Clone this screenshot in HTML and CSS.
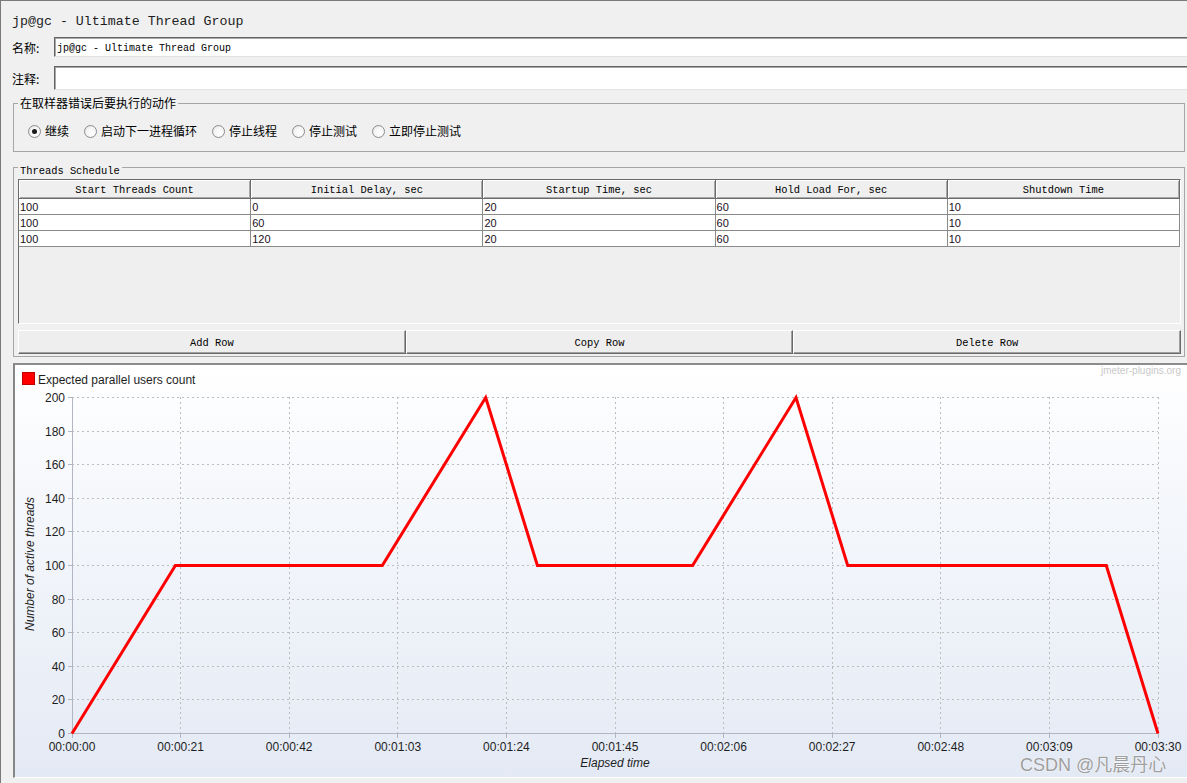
FILE: index.html
```html
<!DOCTYPE html>
<html lang="zh-CN">
<head>
<meta charset="utf-8">
<title>jp@gc - Ultimate Thread Group</title>
<link rel="stylesheet" href="styles.css">
</head>
<body>
<div class="frame">
  <div class="title">jp@gc - Ultimate Thread Group</div>

  <div class="field-row name-row">
    <label class="field-label">名称:</label>
    <div class="text-input">jp@gc - Ultimate Thread Group</div>
  </div>
  <div class="field-row comment-row">
    <label class="field-label">注释:</label>
    <div class="text-input"></div>
  </div>

  <fieldset class="group action-group">
    <legend class="legend-cjk">在取样器错误后要执行的动作</legend>
    <div class="radio-row">
      <span class="radio-item"><span class="radio checked"></span><span class="radio-label">继续</span></span>
      <span class="radio-item"><span class="radio"></span><span class="radio-label">启动下一进程循环</span></span>
      <span class="radio-item"><span class="radio"></span><span class="radio-label">停止线程</span></span>
      <span class="radio-item"><span class="radio"></span><span class="radio-label">停止测试</span></span>
      <span class="radio-item"><span class="radio"></span><span class="radio-label">立即停止测试</span></span>
    </div>
  </fieldset>

  <fieldset class="group schedule-group">
    <legend class="legend-mono">Threads Schedule</legend>
    <div class="table-pane">
      <table class="schedule">
        <thead>
          <tr>
            <th>Start Threads Count</th>
            <th>Initial Delay, sec</th>
            <th>Startup Time, sec</th>
            <th>Hold Load For, sec</th>
            <th>Shutdown Time</th>
          </tr>
        </thead>
        <tbody>
          <tr><td>100</td><td>0</td><td>20</td><td>60</td><td>10</td></tr>
          <tr><td>100</td><td>60</td><td>20</td><td>60</td><td>10</td></tr>
          <tr><td>100</td><td>120</td><td>20</td><td>60</td><td>10</td></tr>
        </tbody>
      </table>
    </div>
    <div class="button-row">
      <button class="btn">Add Row</button>
      <button class="btn">Copy Row</button>
      <button class="btn">Delete Row</button>
    </div>
  </fieldset>

  <div class="chart-panel">
    <svg class="chart" width="1172" height="412" viewBox="15 365 1172 412" xmlns="http://www.w3.org/2000/svg">
      <text class="brand" x="1181" y="374" text-anchor="end">jmeter-plugins.org</text>
      <rect class="legend-swatch" x="22.5" y="372.5" width="12" height="12"/>
      <text class="legend-text" x="38" y="383.5">Expected parallel users count</text>

      <g class="grid">
        <line x1="72" y1="397.5" x2="1158" y2="397.5"/>
        <line x1="72" y1="431.5" x2="1158" y2="431.5"/>
        <line x1="72" y1="464.5" x2="1158" y2="464.5"/>
        <line x1="72" y1="498.5" x2="1158" y2="498.5"/>
        <line x1="72" y1="531.5" x2="1158" y2="531.5"/>
        <line x1="72" y1="565.5" x2="1158" y2="565.5"/>
        <line x1="72" y1="599.5" x2="1158" y2="599.5"/>
        <line x1="72" y1="632.5" x2="1158" y2="632.5"/>
        <line x1="72" y1="666.5" x2="1158" y2="666.5"/>
        <line x1="72" y1="699.5" x2="1158" y2="699.5"/>
        <line x1="180.5" y1="397" x2="180.5" y2="733"/>
        <line x1="289.5" y1="397" x2="289.5" y2="733"/>
        <line x1="397.5" y1="397" x2="397.5" y2="733"/>
        <line x1="506.5" y1="397" x2="506.5" y2="733"/>
        <line x1="615.5" y1="397" x2="615.5" y2="733"/>
        <line x1="723.5" y1="397" x2="723.5" y2="733"/>
        <line x1="832.5" y1="397" x2="832.5" y2="733"/>
        <line x1="940.5" y1="397" x2="940.5" y2="733"/>
        <line x1="1049.5" y1="397" x2="1049.5" y2="733"/>
        <line x1="1158.5" y1="397" x2="1158.5" y2="733"/>
      </g>

      <g class="axis">
        <line x1="72.5" y1="397" x2="72.5" y2="734"/>
        <line x1="72" y1="733.5" x2="1159" y2="733.5"/>
        <line x1="68" y1="397.5" x2="72" y2="397.5"/>
        <line x1="68" y1="431.5" x2="72" y2="431.5"/>
        <line x1="68" y1="464.5" x2="72" y2="464.5"/>
        <line x1="68" y1="498.5" x2="72" y2="498.5"/>
        <line x1="68" y1="531.5" x2="72" y2="531.5"/>
        <line x1="68" y1="565.5" x2="72" y2="565.5"/>
        <line x1="68" y1="599.5" x2="72" y2="599.5"/>
        <line x1="68" y1="632.5" x2="72" y2="632.5"/>
        <line x1="68" y1="666.5" x2="72" y2="666.5"/>
        <line x1="68" y1="699.5" x2="72" y2="699.5"/>
        <line x1="68" y1="733.5" x2="72" y2="733.5"/>
        <line x1="72.5" y1="734" x2="72.5" y2="738"/>
        <line x1="180.5" y1="734" x2="180.5" y2="738"/>
        <line x1="289.5" y1="734" x2="289.5" y2="738"/>
        <line x1="397.5" y1="734" x2="397.5" y2="738"/>
        <line x1="506.5" y1="734" x2="506.5" y2="738"/>
        <line x1="615.5" y1="734" x2="615.5" y2="738"/>
        <line x1="723.5" y1="734" x2="723.5" y2="738"/>
        <line x1="832.5" y1="734" x2="832.5" y2="738"/>
        <line x1="940.5" y1="734" x2="940.5" y2="738"/>
        <line x1="1049.5" y1="734" x2="1049.5" y2="738"/>
        <line x1="1158.5" y1="734" x2="1158.5" y2="738"/>
      </g>

      <g class="tick-label" text-anchor="end">
        <text x="65" y="401.5">200</text>
        <text x="65" y="435.5">180</text>
        <text x="65" y="468.5">160</text>
        <text x="65" y="502.5">140</text>
        <text x="65" y="535.5">120</text>
        <text x="65" y="569.5">100</text>
        <text x="65" y="603.5">80</text>
        <text x="65" y="636.5">60</text>
        <text x="65" y="670.5">40</text>
        <text x="65" y="703.5">20</text>
        <text x="65" y="737.5">0</text>
      </g>
      <g class="tick-label" text-anchor="middle">
        <text x="72" y="751">00:00:00</text>
        <text x="180.6" y="751">00:00:21</text>
        <text x="289.2" y="751">00:00:42</text>
        <text x="397.8" y="751">00:01:03</text>
        <text x="506.4" y="751">00:01:24</text>
        <text x="615" y="751">00:01:45</text>
        <text x="723.6" y="751">00:02:06</text>
        <text x="832.2" y="751">00:02:27</text>
        <text x="940.8" y="751">00:02:48</text>
        <text x="1049.4" y="751">00:03:09</text>
        <text x="1158" y="751">00:03:30</text>
      </g>

      <text class="axis-title" x="615" y="766.5" text-anchor="middle">Elapsed time</text>
      <text class="axis-title" x="0" y="0" text-anchor="middle" transform="translate(33.5 564) rotate(-90)">Number of active threads</text>

      <polyline class="series" points="72,733.5 175.4,565.5 382.3,565.5 485.7,397.5 537.4,565.5 692.6,565.5 796,397.5 847.7,565.5 1106.3,565.5 1158,733.5"/>

      <text class="watermark" x="1020" y="771">CSDN @凡晨丹心</text>
    </svg>
  </div>
</div>
</body>
</html>
```

FILE: styles.css
```css
* {
  box-sizing: border-box;
}

html,
body {
  margin: 0;
  padding: 0;
}

body {
  width: 1187px;
  height: 783px;
  overflow: hidden;
  background: #f0f0f0;
  color: #000;
  font-family: "Noto Sans CJK SC", sans-serif;
}

.frame {
  height: 783px;
  display: flex;
  flex-direction: column;
  border-top: 1px solid #7a7a7a;
  border-left: 1px solid #7a7a7a;
}

.title {
  padding: 9px 0 3px 11px;
  font: 13.3px/24px "Liberation Mono", monospace;
  color: #1d1d1d;
  white-space: nowrap;
}

.field-row {
  display: flex;
  align-items: stretch;
}

.name-row {
  height: 20px;
}

.comment-row {
  height: 24px;
  margin-top: 9px;
}

.field-label {
  width: 53px;
  padding-left: 11px;
  padding-top: 1px;
  display: flex;
  align-items: center;
  font: 12px/14px "Noto Sans CJK SC", sans-serif;
  color: #000;
}

.text-input {
  flex: 1;
  background: #fff;
  border-top: 1px solid #646464;
  border-left: 1px solid #646464;
  border-bottom: 1px solid #e3e3e3;
  box-shadow: inset 1px 1px 0 #a8a8a8;
  padding: 3px 0 0 2px;
  font: 10px/15px "Liberation Mono", monospace;
  color: #000;
  white-space: nowrap;
}

.group {
  margin: 0 2px 0 12px;
  padding: 0;
  border: 1px solid #a6a6a6;
  min-width: 0;
}

.action-group {
  margin-top: 6px;
}

.legend-cjk {
  margin-left: 4px;
  padding: 0 2px;
  font: 12px/14px "Noto Sans CJK SC", sans-serif;
  color: #000;
}

.radio-row {
  display: flex;
  align-items: center;
  gap: 15px;
  height: 20px;
  margin: 11px 0 10px 14px;
}

.radio-item {
  display: flex;
  align-items: center;
  gap: 4px;
}

.radio {
  width: 13px;
  height: 13px;
  border-radius: 50%;
  border: 1px solid #8c8c8c;
  background: radial-gradient(circle at 65% 65%, #ffffff 0%, #f4f4f4 55%, #dcdcdc 100%);
  display: flex;
  align-items: center;
  justify-content: center;
}

.radio.checked::after {
  content: "";
  width: 5px;
  height: 5px;
  border-radius: 50%;
  background: #1b1b1b;
}

.radio-label {
  font: 12px/14px "Noto Sans CJK SC", sans-serif;
  color: #000;
  white-space: nowrap;
}

.schedule-group {
  margin-top: 5px;
  padding: 2px 3px 2px 4px;
}

.legend-mono {
  margin-left: 0;
  padding: 8px 2px 0;
  font: 10.4px/12px "Liberation Mono", monospace;
  color: #000;
}

.table-pane {
  height: 145px;
  background: #efefef;
  border-top: 1px solid #6a6a6a;
  border-left: 1px solid #6a6a6a;
  border-right: 1px solid #ffffff;
  border-bottom: 1px solid #ffffff;
  overflow: hidden;
}

.schedule {
  width: 100%;
  table-layout: fixed;
  border-collapse: separate;
  border-spacing: 0;
}

.schedule th {
  height: 19px;
  padding: 3px 0 0;
  background: #efefef;
  border-right: 1px solid #6b6b6b;
  border-bottom: 1px solid #6b6b6b;
  box-shadow: inset 1px 1px 0 #ffffff, inset -1px -1px 0 #a9a9a9;
  font: 10.4px/15px "Liberation Mono", monospace;
  font-weight: normal;
  color: #000;
  text-align: center;
  white-space: nowrap;
}

.schedule td {
  height: 16px;
  padding: 2px 1px 0;
  background: #ffffff;
  border-right: 1px solid #8a8a8a;
  border-bottom: 1px solid #8a8a8a;
  font: 11px/13px "Liberation Sans", Arial, sans-serif;
  color: #1a0f1a;
  white-space: nowrap;
}

.button-row {
  display: flex;
  margin-top: 6px;
}

.btn {
  flex: 1;
  height: 24px;
  margin: 0;
  padding: 3px 0 0;
  background: #eeeeee;
  border-top: 1px solid #ffffff;
  border-left: 1px solid #ffffff;
  border-right: 1px solid #696969;
  border-bottom: 1px solid #696969;
  box-shadow: inset -1px -1px 0 #a0a0a0;
  font: 10.4px/17px "Liberation Mono", monospace;
  color: #000;
  cursor: default;
}

.chart-panel {
  height: 415px;
  margin: 6px 0 0 12px;
  border-top: 2px solid #8c8c8c;
  border-left: 2px solid #868686;
  border-bottom: 1px solid #ffffff;
  background: linear-gradient(to bottom, #ffffff 0%, #f7f9fc 25%, #e4eaf5 100%);
}

.chart {
  display: block;
}

.brand {
  font: 10px "Liberation Sans", Arial, sans-serif;
  fill: #c9c9c9;
}

.legend-swatch {
  fill: #ff0000;
  stroke: #c00000;
  stroke-width: 1;
}

.legend-text {
  font: 12px "Liberation Sans", Arial, sans-serif;
  fill: #1e1e1e;
}

.grid line {
  stroke: #bcbcbc;
  stroke-width: 1;
  stroke-dasharray: 2 3;
}

.axis line {
  stroke: #b2b6c2;
  stroke-width: 1;
}

.tick-label {
  font: 12px "Liberation Sans", Arial, sans-serif;
  fill: #1e1e1e;
}

.axis-title {
  font: italic 12px "Liberation Sans", Arial, sans-serif;
  fill: #1e1e1e;
}

.series {
  fill: none;
  stroke: #ff0000;
  stroke-width: 3;
  stroke-linejoin: miter;
}

.watermark {
  font: 18px "Liberation Sans", "Noto Sans CJK SC", sans-serif;
  fill: #9e9e9e;
  stroke: #ffffff;
  stroke-width: 0.6;
  paint-order: stroke;
}
```
